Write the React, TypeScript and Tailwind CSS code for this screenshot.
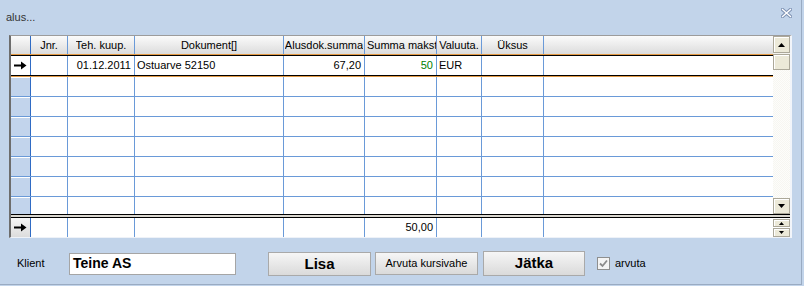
import React from 'react';

const font = "font-['Liberation_Sans',Arial,sans-serif]";

// column widths include the 1px right grid line
const columns = [
  { label: 'Jnr.', w: 'w-[37px]' },
  { label: 'Teh. kuup.', w: 'w-[67px]' },
  { label: 'Dokument[]', w: 'w-[149px]' },
  { label: 'Alusdok.summa', w: 'w-[81px]' },
  { label: 'Summa maksta', w: 'w-[72px]' },
  { label: 'Valuuta.', w: 'w-[45px]' },
  { label: 'Üksus', w: 'w-[62px]' },
];

const Arrow = () => (
  <svg width="13" height="9" viewBox="0 0 13 9">
    <path d="M0 3.5h8v2H0z" fill="#000" />
    <path d="M7 0.5L12.5 4.5L7 8.5z" fill="#000" />
  </svg>
);

const Tri = ({ up, size = 'big' }: { up?: boolean; size?: 'big' | 'small' }) => {
  const s = size === 'big' ? { w: 7, h: 4 } : { w: 5, h: 3 };
  return (
    <svg width={s.w} height={s.h} viewBox={`0 0 ${s.w} ${s.h}`}>
      <path d={up ? `M0 ${s.h}L${s.w / 2} 0L${s.w} ${s.h}z` : `M0 0L${s.w / 2} ${s.h}L${s.w} 0z`} fill="#000" />
    </svg>
  );
};

const ScrollBtn = ({ className, children }: { className: string; children: React.ReactNode }) => (
  <div className={`${className} shrink-0 flex items-center justify-center bg-[#ece9d8] border border-[#aca899] shadow-[inset_1px_1px_0_#fff]`}>
    {children}
  </div>
);

type Cells = (React.ReactNode | null)[];

const Row = ({ cells, indicator, height, line = true }: { cells: Cells; indicator: 'blue' | 'white' | 'gray'; height: string; line?: boolean }) => {
  const indBg =
    indicator === 'blue'
      ? 'bg-[#c2d4ec] shadow-[inset_0_1px_0_#fff]'
      : indicator === 'white'
        ? 'bg-white'
        : 'bg-linear-to-b from-[#f6f6f6] to-[#dcdcdc]';
  return (
    <div className={`flex ${height} ${line ? 'border-b border-[#6a9ad8]' : ''}`}>
      <div className={`w-[20px] shrink-0 border-r border-[#2f6bc4] flex items-center justify-center ${indBg}`}>
        {indicator !== 'blue' && <Arrow />}
      </div>
      {columns.map((c, i) => (
        <div key={i} className={`${c.w} shrink-0 border-r border-[#6a9ad8] flex items-center overflow-hidden whitespace-nowrap`}>
          {cells[i]}
        </div>
      ))}
      <div className="flex-1" />
    </div>
  );
};

const R = ({ children, className = '' }: { children: React.ReactNode; className?: string }) => (
  <span className={`w-full text-right pr-[3px] ${className}`}>{children}</span>
);
const L = ({ children }: { children: React.ReactNode }) => <span className="pl-[2px]">{children}</span>;

export default function App() {
  const empty: Cells = [];
  return (
    <div className={`w-[804px] h-[286px] bg-[#c2d4ea] ${font} text-[11px] text-black`}>
      <div className="w-[802px] h-[285px] border-r border-b border-[#9aabc2] flex flex-col">
        {/* title */}
        <div className="h-[35px] flex justify-between shrink-0">
          <div className="pl-[6px] pt-[9px] text-[11px] text-[#333]">alus...</div>
          <div className="pr-[9px] pt-[8px]">
            <svg width="11" height="10" viewBox="0 0 11 10">
              <path d="M1.5 1.5L9.5 8.5M9.5 1.5L1.5 8.5" stroke="#7f93b4" strokeWidth="3.4" strokeLinecap="square" />
              <path d="M1.5 1.5L9.5 8.5M9.5 1.5L1.5 8.5" stroke="#fff" strokeWidth="1.3" strokeLinecap="square" />
            </svg>
          </div>
        </div>

        {/* grid */}
        <div className="ml-[9px] w-[783px] h-[203px] shrink-0 bg-white border-l-2 border-l-[#6d6d6d] border-t border-t-[#9c9c9c] border-r-2 border-r-[#f2f5fa] border-b border-b-[#eef2f8] flex flex-col">
          <div className="flex h-[178px]">
            <div className="flex-1 flex flex-col">
              {/* header */}
              <div className="flex h-[18px] bg-linear-to-b from-[#fbfbfb] to-[#dcdcdc]">
                <div className="w-[20px] shrink-0 border-r border-[#2f6bc4]" />
                {columns.map((c, i) => (
                  <div key={i} className={`${c.w} shrink-0 border-r border-[#6a9ad8] flex items-center overflow-hidden whitespace-nowrap ${i === 4 ? 'justify-start pl-[2px]' : 'justify-center'}`}>
                    <span className="block min-w-0 overflow-hidden">{c.label}</span>
                  </div>
                ))}
                <div className="flex-1" />
              </div>
              {/* selected row */}
              <div className="border-y border-[#e39a45]">
                <div className="border-y border-black">
                  <Row
                    indicator="white"
                    height="h-[19px]"
                    line={false}
                    cells={[
                      null,
                      <R>01.12.2011</R>,
                      <L>Ostuarve 52150</L>,
                      <R>67,20</R>,
                      <R className="text-[#008000]">50</R>,
                      <L>EUR</L>,
                      null,
                    ]}
                  />
                </div>
              </div>
              {[0, 1, 2, 3, 4, 5].map((i) => (
                <Row key={i} indicator="blue" height="h-[20px]" cells={empty} />
              ))}
              <Row indicator="blue" height="h-[17px]" line={false} cells={empty} />
            </div>
            {/* scrollbar */}
            <div className="w-[17px] shrink-0 flex flex-col bg-[#f4f3ee]">
              <ScrollBtn className="h-[17px]">
                <Tri up />
              </ScrollBtn>
              <ScrollBtn className="h-[16px] mt-px">
                <span />
              </ScrollBtn>
              <div className="flex-1 bg-[repeating-conic-gradient(#f7f6f1_0_25%,#fdfdfb_0_50%)] bg-[length:2px_2px]" />
              <ScrollBtn className="h-[16px]">
                <Tri />
              </ScrollBtn>
            </div>
          </div>

          {/* footer separator */}
          <div className="h-[4px] shrink-0 border-y border-black bg-[#dad7cf]" />

          {/* footer row */}
          <div className="flex h-[19px]">
            <div className="flex-1">
              <Row indicator="gray" height="h-[19px]" line={false} cells={[null, null, null, null, <R>50,00</R>, null, null]} />
            </div>
            <div className="w-[17px] shrink-0 flex flex-col pt-px gap-px">
              <ScrollBtn className="h-[8px]">
                <Tri up size="small" />
              </ScrollBtn>
              <ScrollBtn className="h-[9px]">
                <Tri size="small" />
              </ScrollBtn>
            </div>
          </div>
        </div>

        {/* bottom controls */}
        <div className="flex items-center pl-[17px] pt-[13px]">
          <div className="w-[52px] text-[11px]">Klient</div>
          <div className="w-[167px] h-[22px] bg-white border border-[#a5a5a5] flex items-center pl-[3px] text-[14px] font-bold">
            Teine AS
          </div>
          <button className="ml-[32px] w-[103px] h-[24px] border border-[#a9a9a9] bg-linear-to-b from-[#f6f6f6] to-[#dadada] text-[15px] font-bold">
            Lisa
          </button>
          <button className="ml-[4px] w-[103px] h-[23px] border border-[#a9a9a9] bg-linear-to-b from-[#f6f6f6] to-[#dadada] text-[11px]">
            Arvuta kursivahe
          </button>
          <button className="ml-[5px] w-[102px] h-[25px] border border-[#a9a9a9] bg-linear-to-b from-[#f6f6f6] to-[#dadada] text-[15px] font-bold">
            Jätka
          </button>
          <div className="ml-[12px] w-[13px] h-[13px] border border-[#8e8f8f] bg-[#f4f4f4] flex items-center justify-center">
            <svg width="9" height="9" viewBox="0 0 9 9">
              <path d="M1 4.5L3.5 7L8 1.5" stroke="#8b8b8b" strokeWidth="1.8" fill="none" />
            </svg>
          </div>
          <div className="ml-[5px] text-[11px]">arvuta</div>
        </div>
      </div>
    </div>
  );
}
